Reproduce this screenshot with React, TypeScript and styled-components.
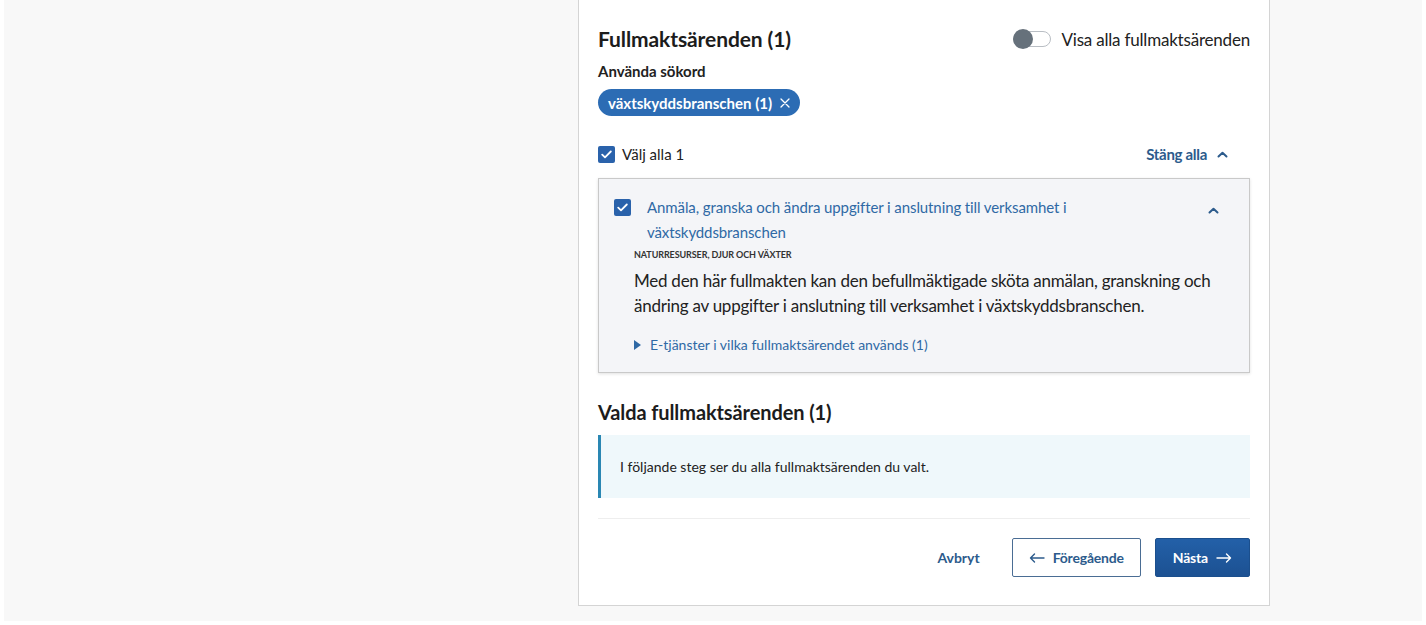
import React from "react";
import styled, { createGlobalStyle } from "styled-components";

const GlobalStyle = createGlobalStyle`
  html, body { margin: 0; padding: 0; background: #ffffff; }
  body { font-family: Lato, "Noto Sans", sans-serif; color: #1f1f1f; }
  * { box-sizing: border-box; }
`;

const Outer = styled.div`
  padding: 0 4px 4px 4px;
  background: #ffffff;
`;

const Canvas = styled.div`
  background: #f8f8f8;
  height: 621px;
  display: grid;
  grid-template-columns: 574px 692px;
  align-items: start;
`;

const Card = styled.section`
  background: #ffffff;
  border: 1px solid #d4d4d4;
  border-top: none;
  padding: 25px 19px 28px 19px;
  display: flex;
  flex-direction: column;
`;

const HeaderRow = styled.div`
  display: flex;
  justify-content: space-between;
  align-items: center;
`;

const Heading = styled.h2`
  margin: 0;
  font-size: 21px;
  line-height: 28px;
  font-weight: 700;
  color: #1c1c1c;
  letter-spacing: -0.1px;
`;

const ToggleLabel = styled.label`
  display: flex;
  align-items: center;
  gap: 10px;
  font-size: 17px;
  letter-spacing: -0.2px;
  color: #222;
`;

const Track = styled.span`
  position: relative;
  width: 38px;
  height: 16px;
  border: 1px solid #b9bec4;
  border-radius: 9px;
  background: #fff;
`;

const Knob = styled.span`
  position: absolute;
  left: -1px;
  top: -3px;
  width: 20px;
  height: 20px;
  border-radius: 50%;
  background: #66717b;
`;

const SubLabel = styled.div`
  margin-top: 9px;
  font-size: 15px;
  font-weight: 700;
  color: #222;
`;

const Chip = styled.span`
  margin-top: 9px;
  align-self: flex-start;
  display: inline-flex;
  align-items: center;
  gap: 8px;
  height: 27px;
  padding: 0 10px;
  border-radius: 14px;
  background: #2c6cb4;
  color: #fff;
  font-size: 15px;
  font-weight: 700;
`;

const SelectRow = styled.div`
  margin-top: 29px;
  display: flex;
  justify-content: space-between;
  align-items: center;
`;

const CheckLabel = styled.label`
  display: flex;
  align-items: center;
  gap: 7px;
  font-size: 15px;
  color: #222;
`;

const Box = styled.span`
  display: inline-flex;
  align-items: center;
  justify-content: center;
  flex: none;
  width: 17px;
  height: 17px;
  border-radius: 2px;
  background: #2a62ab;
`;

const LinkButton = styled.button`
  border: none;
  background: none;
  padding: 0 22px 0 0;
  display: flex;
  align-items: center;
  gap: 10px;
  font-family: inherit;
  font-size: 15px;
  font-weight: 700;
  letter-spacing: -0.3px;
  color: #2c5b8c;
`;

const Item = styled.div`
  margin-top: 15px;
  background: #f4f5f8;
  border: 1px solid #c9c9c9;
  box-shadow: 0 1px 3px rgba(0, 0, 0, 0.12);
  padding: 16px 0 19px 0;
`;

const ItemHead = styled.div`
  display: grid;
  grid-template-columns: 17px 1fr 24px;
  column-gap: 16px;
  padding: 0 24px 0 15px;
  align-items: start;
`;

const ItemCheck = styled(Box)`
  margin-top: 4px;
`;

const ItemTitle = styled.div`
  font-size: 15px;
  line-height: 25px;
  color: #2f69a5;
  max-width: 430px;
  letter-spacing: -0.1px;
`;

const Chevron = styled.span`
  margin-top: 12px;
  display: flex;
  justify-content: center;
`;

const ItemBody = styled.div`
  padding: 0 24px 0 35px;
`;

const Category = styled.div`
  margin-top: 4px;
  font-size: 9px;
  font-weight: 700;
  text-transform: uppercase;
  color: #333;
  letter-spacing: -0.1px;
`;

const Description = styled.p`
  margin: 8px 0 0 0;
  font-size: 17px;
  line-height: 25px;
  letter-spacing: -0.25px;
  color: #222;
`;

const Services = styled.div`
  margin-top: 18px;
  display: flex;
  align-items: center;
  gap: 9px;
  font-size: 14px;
  color: #2f69a5;
`;

const Triangle = styled.span`
  width: 0;
  height: 0;
  border-top: 5px solid transparent;
  border-bottom: 5px solid transparent;
  border-left: 7px solid #2f69a5;
`;

const SecondHeading = styled(Heading)`
  margin-top: 25px;
  font-size: 20px;
`;

const Info = styled.div`
  margin-top: 9px;
  background: #eff8fb;
  border-left: 3px solid #2a87b3;
  height: 63px;
  display: flex;
  align-items: center;
  padding-left: 19px;
  font-size: 14px;
  color: #222;
`;

const Footer = styled.div`
  margin-top: 20px;
  border-top: 1px solid #eeeeee;
  padding-top: 19px;
  display: flex;
  justify-content: flex-end;
  align-items: center;
  gap: 14px;
`;

const TextButton = styled.button`
  border: none;
  background: none;
  font-family: inherit;
  font-size: 14px;
  font-weight: 700;
  color: #2c5b8c;
  padding: 0 18px;
`;

const Button = styled.button<{ $primary?: boolean }>`
  height: 39px;
  display: inline-flex;
  align-items: center;
  gap: 8px;
  padding: 0 ${(p) => (p.$primary ? "17px" : "16px")};
  font-family: inherit;
  font-size: 14px;
  font-weight: 700;
  letter-spacing: -0.2px;
  border-radius: 2px;
  border: 1px solid ${(p) => (p.$primary ? "#1b4f8d" : "#4a6d94")};
  background: ${(p) => (p.$primary ? "linear-gradient(#2360a8, #1c5192)" : "#ffffff")};
  color: ${(p) => (p.$primary ? "#ffffff" : "#2c5b8c")};
`;

const Check = () => (
  <svg width="11" height="9" viewBox="0 0 11 9" fill="none">
    <path d="M1.2 4.6 L4 7.3 L9.8 1.5" stroke="#fff" strokeWidth="1.8" strokeLinecap="round" strokeLinejoin="round" />
  </svg>
);

const Up = () => (
  <svg width="11" height="7" viewBox="0 0 11 7" fill="none">
    <path d="M1.5 5.5 L5.5 1.7 L9.5 5.5" stroke="#2c5b8c" strokeWidth="2" strokeLinecap="round" strokeLinejoin="round" />
  </svg>
);

const Close = () => (
  <svg width="10" height="10" viewBox="0 0 10 10" fill="none">
    <path d="M1 1 L9 9 M9 1 L1 9" stroke="#fff" strokeWidth="1.3" strokeLinecap="round" />
  </svg>
);

const Arrow = ({ left, color }: { left?: boolean; color: string }) => (
  <svg width="16" height="10" viewBox="0 0 16 10" fill="none" style={left ? { transform: "scaleX(-1)" } : undefined}>
    <path d="M1 5 H14.5 M10.5 1 L14.5 5 L10.5 9" stroke={color} strokeWidth="1.4" strokeLinecap="round" strokeLinejoin="round" />
  </svg>
);

export default function App() {
  return (
    <>
      <GlobalStyle />
      <Outer>
        <Canvas>
          <div />
          <Card>
            <HeaderRow>
              <Heading>Fullmaktsärenden (1)</Heading>
              <ToggleLabel>
                <Track>
                  <Knob />
                </Track>
                Visa alla fullmaktsärenden
              </ToggleLabel>
            </HeaderRow>
            <SubLabel>Använda sökord</SubLabel>
            <Chip>
              växtskyddsbranschen (1)
              <Close />
            </Chip>
            <SelectRow>
              <CheckLabel>
                <Box>
                  <Check />
                </Box>
                Välj alla 1
              </CheckLabel>
              <LinkButton>
                Stäng alla
                <Up />
              </LinkButton>
            </SelectRow>
            <Item>
              <ItemHead>
                <ItemCheck>
                  <Check />
                </ItemCheck>
                <ItemTitle>
                  Anmäla, granska och ändra uppgifter i anslutning till verksamhet i växtskyddsbranschen
                </ItemTitle>
                <Chevron>
                  <Up />
                </Chevron>
              </ItemHead>
              <ItemBody>
                <Category>Naturresurser, djur och växter</Category>
                <Description>
                  Med den här fullmakten kan den befullmäktigade sköta anmälan, granskning och ändring av uppgifter i
                  anslutning till verksamhet i växtskyddsbranschen.
                </Description>
                <Services>
                  <Triangle />
                  E-tjänster i vilka fullmaktsärendet används (1)
                </Services>
              </ItemBody>
            </Item>
            <SecondHeading>Valda fullmaktsärenden (1)</SecondHeading>
            <Info>I följande steg ser du alla fullmaktsärenden du valt.</Info>
            <Footer>
              <TextButton>Avbryt</TextButton>
              <Button>
                <Arrow left color="#2c5b8c" />
                Föregående
              </Button>
              <Button $primary>
                Nästa
                <Arrow color="#ffffff" />
              </Button>
            </Footer>
          </Card>
        </Canvas>
      </Outer>
    </>
  );
}
